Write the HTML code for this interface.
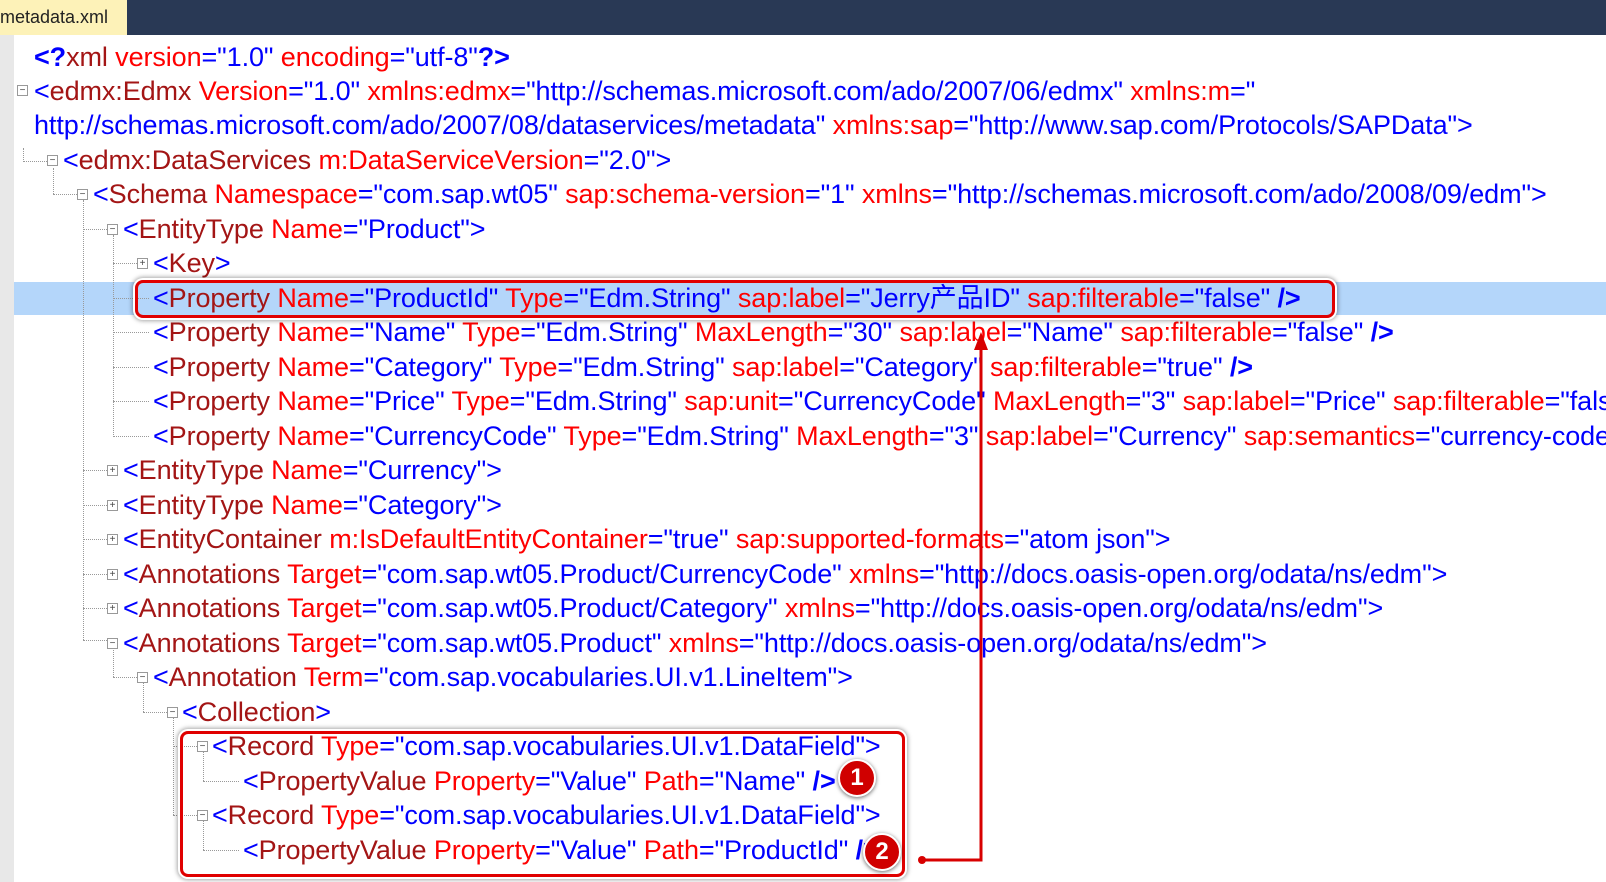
<!DOCTYPE html>
<html><head><meta charset="utf-8"><style>
body{margin:0;width:1606px;height:882px;overflow:hidden;background:#fff;position:relative;font-family:"Liberation Sans","Noto Sans CJK SC",sans-serif}
.bar{position:absolute;left:0;top:0;width:1606px;height:35px;background:#293955}
.tab{position:absolute;left:0;top:0;width:127px;height:35px;background:#fdf2b8;font-size:18px;line-height:34px;color:#222}
.gut{position:absolute;left:0;top:35px;width:14px;height:847px;background:#e8e8e8}
.hl{position:absolute;left:14px;top:282px;width:1592px;height:33px;background:#b4d6fa}
.l{position:absolute;white-space:pre;font-size:27px;line-height:34px;color:#0000ff;letter-spacing:-0.1px}
.d{color:#a31515}.r{color:#ff0000}.k{font-weight:bold}
.x{position:absolute;width:9px;height:9px;border:1px solid #999;background:#fff;font-size:10px;line-height:9px;text-align:center;color:#444}
.v{position:absolute;border-left:1px dotted #999}
.h{position:absolute;border-top:1px dotted #999}
.box{position:absolute;border:3px solid #e00000;border-radius:8px;box-shadow:0 0 0 2px #fff,0 0 4px 3px rgba(0,0,0,.35)}
.c{position:absolute;width:34px;height:34px;border-radius:50%;background:#d00000;border:2px solid #fff;box-shadow:0 1px 4px rgba(0,0,0,.6);color:#fff;font:bold 24px/34px "Liberation Sans",sans-serif;text-align:center}
</style></head><body>
<div class="bar"></div><div class="tab">metadata.xml</div>
<div class="gut"></div><div class="hl"></div>

<div class="l" style="left:34px;top:40px"><span class="k">&lt;?</span><span class="d">xml</span> <span class="r">version</span>="1.0" <span class="r">encoding</span>="utf-8"<span class="k">?&gt;</span></div>
<div class="l" style="left:34px;top:74px">&lt;<span class="d">edmx:Edmx</span> <span class="r">Version</span>="1.0" <span class="r">xmlns:edmx</span>="http://schemas.microsoft.com/ado/2007/06/edmx" <span class="r">xmlns:m</span>="</div>
<div class="l" style="left:34px;top:108px">http://schemas.microsoft.com/ado/2007/08/dataservices/metadata" <span class="r">xmlns:sap</span>="http://www.sap.com/Protocols/SAPData"&gt;</div>
<div class="l" style="left:63px;top:143px">&lt;<span class="d">edmx:DataServices</span> <span class="r">m:DataServiceVersion</span>="2.0"&gt;</div>
<div class="l" style="left:93px;top:177px">&lt;<span class="d">Schema</span> <span class="r">Namespace</span>="com.sap.wt05" <span class="r">sap:schema-version</span>="1" <span class="r">xmlns</span>="http://schemas.microsoft.com/ado/2008/09/edm"&gt;</div>
<div class="l" style="left:123px;top:212px">&lt;<span class="d">EntityType</span> <span class="r">Name</span>="Product"&gt;</div>
<div class="l" style="left:153px;top:246px">&lt;<span class="d">Key</span>&gt;</div>
<div class="l" style="left:153px;top:281px">&lt;<span class="d">Property</span> <span class="r">Name</span>="ProductId" <span class="r">Type</span>="Edm.String" <span class="r">sap:label</span>="Jerry产品ID" <span class="r">sap:filterable</span>="false" <span class="k">/&gt;</span></div>
<div class="l" style="left:153px;top:315px">&lt;<span class="d">Property</span> <span class="r">Name</span>="Name" <span class="r">Type</span>="Edm.String" <span class="r">MaxLength</span>="30" <span class="r">sap:label</span>="Name" <span class="r">sap:filterable</span>="false" <span class="k">/&gt;</span></div>
<div class="l" style="left:153px;top:350px">&lt;<span class="d">Property</span> <span class="r">Name</span>="Category" <span class="r">Type</span>="Edm.String" <span class="r">sap:label</span>="Category" <span class="r">sap:filterable</span>="true" <span class="k">/&gt;</span></div>
<div class="l" style="left:153px;top:384px">&lt;<span class="d">Property</span> <span class="r">Name</span>="Price" <span class="r">Type</span>="Edm.String" <span class="r">sap:unit</span>="CurrencyCode" <span class="r">MaxLength</span>="3" <span class="r">sap:label</span>="Price" <span class="r">sap:filterable</span>="false" /&gt;</div>
<div class="l" style="left:153px;top:419px">&lt;<span class="d">Property</span> <span class="r">Name</span>="CurrencyCode" <span class="r">Type</span>="Edm.String" <span class="r">MaxLength</span>="3" <span class="r">sap:label</span>="Currency" <span class="r">sap:semantics</span>="currency-code" /&gt;</div>
<div class="l" style="left:123px;top:453px">&lt;<span class="d">EntityType</span> <span class="r">Name</span>="Currency"&gt;</div>
<div class="l" style="left:123px;top:488px">&lt;<span class="d">EntityType</span> <span class="r">Name</span>="Category"&gt;</div>
<div class="l" style="left:123px;top:522px">&lt;<span class="d">EntityContainer</span> <span class="r">m:IsDefaultEntityContainer</span>="true" <span class="r">sap:supported-formats</span>="atom json"&gt;</div>
<div class="l" style="left:123px;top:557px">&lt;<span class="d">Annotations</span> <span class="r">Target</span>="com.sap.wt05.Product/CurrencyCode" <span class="r">xmlns</span>="http://docs.oasis-open.org/odata/ns/edm"&gt;</div>
<div class="l" style="left:123px;top:591px">&lt;<span class="d">Annotations</span> <span class="r">Target</span>="com.sap.wt05.Product/Category" <span class="r">xmlns</span>="http://docs.oasis-open.org/odata/ns/edm"&gt;</div>
<div class="l" style="left:123px;top:626px">&lt;<span class="d">Annotations</span> <span class="r">Target</span>="com.sap.wt05.Product" <span class="r">xmlns</span>="http://docs.oasis-open.org/odata/ns/edm"&gt;</div>
<div class="l" style="left:153px;top:660px">&lt;<span class="d">Annotation</span> <span class="r">Term</span>="com.sap.vocabularies.UI.v1.LineItem"&gt;</div>
<div class="l" style="left:182px;top:695px">&lt;<span class="d">Collection</span>&gt;</div>
<div class="l" style="left:212px;top:729px">&lt;<span class="d">Record</span> <span class="r">Type</span>="com.sap.vocabularies.UI.v1.DataField"&gt;</div>
<div class="l" style="left:243px;top:764px">&lt;<span class="d">PropertyValue</span> <span class="r">Property</span>="Value" <span class="r">Path</span>="Name" <span class="k">/&gt;</span></div>
<div class="l" style="left:212px;top:798px">&lt;<span class="d">Record</span> <span class="r">Type</span>="com.sap.vocabularies.UI.v1.DataField"&gt;</div>
<div class="l" style="left:243px;top:833px">&lt;<span class="d">PropertyValue</span> <span class="r">Property</span>="Value" <span class="r">Path</span>="ProductId" <span class="k">/&gt;</span></div>

<div class="v" style="left:23px;top:148px;height:14px"></div><div class="h" style="left:23px;top:161px;width:26px"></div>
<div class="v" style="left:53px;top:168px;height:26px"></div><div class="h" style="left:53px;top:194px;width:26px"></div>
<div class="v" style="left:83px;top:200px;height:440px"></div>
<div class="h" style="left:83px;top:229px;width:24px"></div>
<div class="h" style="left:83px;top:470px;width:24px"></div>
<div class="h" style="left:83px;top:505px;width:24px"></div>
<div class="h" style="left:83px;top:539px;width:24px"></div>
<div class="h" style="left:83px;top:574px;width:24px"></div>
<div class="h" style="left:83px;top:608px;width:24px"></div>
<div class="h" style="left:83px;top:640px;width:24px"></div>
<div class="v" style="left:113px;top:235px;height:202px"></div>
<div class="h" style="left:113px;top:263px;width:24px"></div>
<div class="h" style="left:113px;top:298px;width:36px"></div>
<div class="h" style="left:113px;top:332px;width:36px"></div>
<div class="h" style="left:113px;top:367px;width:36px"></div>
<div class="h" style="left:113px;top:401px;width:36px"></div>
<div class="h" style="left:113px;top:436px;width:36px"></div>
<div class="v" style="left:113px;top:645px;height:32px"></div><div class="h" style="left:113px;top:677px;width:24px"></div>
<div class="v" style="left:143px;top:680px;height:32px"></div><div class="h" style="left:143px;top:712px;width:24px"></div>
<div class="v" style="left:173px;top:715px;height:100px"></div>
<div class="h" style="left:173px;top:746px;width:24px"></div><div class="h" style="left:173px;top:815px;width:24px"></div>
<div class="v" style="left:203px;top:752px;height:29px"></div><div class="h" style="left:203px;top:781px;width:36px"></div>
<div class="v" style="left:203px;top:821px;height:29px"></div><div class="h" style="left:203px;top:850px;width:36px"></div>

<div class="x" style="left:17px;top:85px">−</div>
<div class="x" style="left:47px;top:155px">−</div>
<div class="x" style="left:77px;top:189px">−</div>
<div class="x" style="left:107px;top:224px">−</div>
<div class="x" style="left:137px;top:258px">+</div>
<div class="x" style="left:107px;top:465px">+</div>
<div class="x" style="left:107px;top:500px">+</div>
<div class="x" style="left:107px;top:534px">+</div>
<div class="x" style="left:107px;top:569px">+</div>
<div class="x" style="left:107px;top:603px">+</div>
<div class="x" style="left:107px;top:638px">−</div>
<div class="x" style="left:137px;top:672px">−</div>
<div class="x" style="left:167px;top:707px">−</div>
<div class="x" style="left:197px;top:741px">−</div>
<div class="x" style="left:197px;top:810px">−</div>

<div class="box" style="left:135px;top:280px;width:1194px;height:32px"></div>
<div class="box" style="left:180px;top:731px;width:719px;height:140px"></div>
<svg style="position:absolute;left:0;top:0" width="1606" height="882">
<polyline points="922,860 981,860 981,345" fill="none" stroke="#d80000" stroke-width="3"/>
<polygon points="981,332 974,350 988,350" fill="#d80000"/>
<circle cx="922" cy="860" r="4" fill="#d80000"/>
</svg>
<div class="c" style="left:838px;top:759px">1</div>
<div class="c" style="left:863px;top:833px">2</div>
</body></html>
